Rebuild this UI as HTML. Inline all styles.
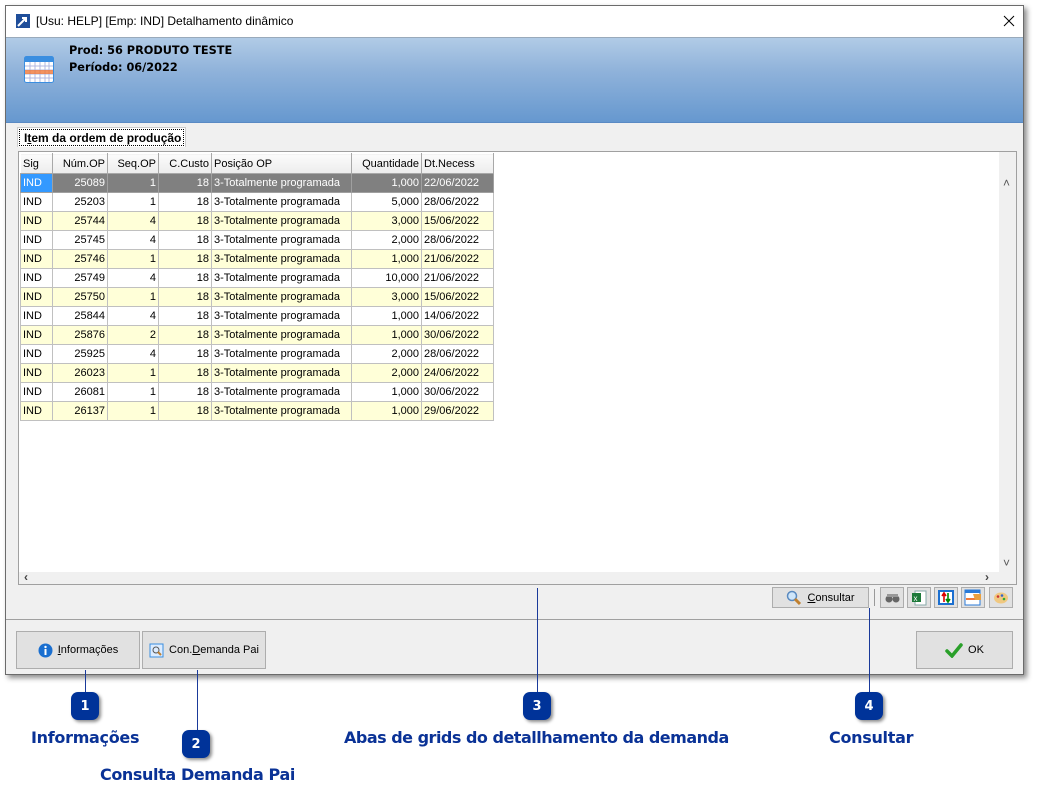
<!DOCTYPE html>
<html><head><meta charset="utf-8">
<style>
*{box-sizing:border-box;margin:0;padding:0}
body{width:1047px;height:804px;background:#fff;position:relative;font-family:"Liberation Sans",Tahoma,sans-serif;font-size:11px;color:#000;overflow:hidden}
.abs{position:absolute}
#win{left:5px;top:5px;width:1019px;height:670px;background:#f0f0f0;border:1px solid #6b6b6b;box-shadow:3px 3px 5px rgba(0,0,0,.45)}
#title{left:0;top:0;width:1017px;height:31px;background:#fff}
#hdr{left:0;top:31px;width:1017px;height:86px;background:linear-gradient(#b1cbe6,#8fb2da 40%,#6698cf);border-top:1px solid #9ab;border-bottom:1px solid #5a8ac4}
.hb{font-family:"DejaVu Sans",sans-serif;font-weight:bold;font-size:11.3px;color:#000}
#grid{left:12px;top:145px;width:999px;height:434px;border:1px solid #a0a0a0;background:#fff}
table{border-collapse:collapse;position:absolute;left:1px;top:1px;table-layout:fixed}
td{height:19px;border:1px solid #c0c0c0;padding:0 2px;white-space:nowrap;overflow:hidden;font-size:11px}
tr.h td{height:20px;background:linear-gradient(#fbfbfb,#ececec);border-color:#fff #a8a8a8 #a8a8a8 #fff;}
td.r{text-align:right}
tr.s td{background:#808080;color:#fff;border-color:#a0a0a0}
tr.s td:first-child{background:#3399ff}
tr.y td{background:#ffffd8}
.btn{background:#e1e1e1;border:1px solid #adadad;display:flex;align-items:center;justify-content:center;gap:5px;font-size:11px}
.tb{top:581px;width:24px;height:21px;background:#e1e1e1;border:1px solid #adadad}
.badge{width:28px;height:28px;border-radius:7px;background:#003399;color:#fff;font:bold 13px "DejaVu Sans",sans-serif;display:flex;align-items:center;justify-content:center;box-shadow:2px 2px 3px rgba(0,0,0,.45)}
.ln{width:1px;background:#1a3a9a}
.lbl{font:900 16px "DejaVu Sans",sans-serif;color:#0a3296;white-space:nowrap}
</style></head><body>
<div id="win" class="abs">
 <div id="title" class="abs">
  <svg class="abs" style="left:10px;top:8px" width="14" height="14"><rect width="14" height="14" fill="#1f4e9a"/><path d="M2 12 L10 4 M6 4 H10 V8" stroke="#fff" stroke-width="2" fill="none"/></svg>
  <div class="abs" style="left:30px;top:8px;font-size:12px">[Usu: HELP] [Emp: IND] Detalhamento dinâmico</div>
  <svg class="abs" style="left:997px;top:9px" width="12" height="12"><path d="M1 1L11 11M11 1L1 11" stroke="#000" stroke-width="1"/></svg>
 </div>
 <div id="hdr" class="abs">
  <svg class="abs" style="left:18px;top:18px" width="30" height="27"><rect x=".5" y=".5" width="29" height="26" rx="2" fill="#fff" stroke="#3a8ee0"/><rect x="1" y="1" width="28" height="5" fill="#3a8ee0"/><g stroke="#b0b8e0"><path d="M1 10H29M1 14H29M1 18H29M1 22H29M6 6V26M11 6V26M16 6V26M21 6V26M25 6V26"/></g><rect x="1" y="14" width="28" height="4" fill="#f07838" opacity=".8"/></svg>
  <div class="abs hb" style="left:63px;top:6px">Prod: 56 PRODUTO TESTE</div>
  <div class="abs hb" style="left:63px;top:23px">Período: 06/2022</div>
 </div>
 <div class="abs" style="left:11px;top:121px;width:169px;height:20px;background:#fff;border:1px solid #ccc;border-bottom:none"></div>
 <div class="abs" style="left:13px;top:123px;width:165px;height:17px;border:1px dotted #000;font-weight:bold;font-size:12px;padding:1px 0 0 4px">I<u>t</u>em da ordem de produção</div>
 <div id="grid" class="abs">
  <table>
   <colgroup><col style="width:32px"><col style="width:55px"><col style="width:51px"><col style="width:53px"><col style="width:140px"><col style="width:70px"><col style="width:72px"></colgroup>
   <tr class="h"><td>Sig</td><td class="r">Núm.OP</td><td class="r">Seq.OP</td><td class="r">C.Custo</td><td>Posição OP</td><td class="r">Quantidade</td><td>Dt.Necess</td></tr>
   <tr class="s"><td>IND</td><td class="r">25089</td><td class="r">1</td><td class="r">18</td><td>3-Totalmente programada</td><td class="r">1,000</td><td>22/06/2022</td></tr>
   <tr><td>IND</td><td class="r">25203</td><td class="r">1</td><td class="r">18</td><td>3-Totalmente programada</td><td class="r">5,000</td><td>28/06/2022</td></tr>
   <tr class="y"><td>IND</td><td class="r">25744</td><td class="r">4</td><td class="r">18</td><td>3-Totalmente programada</td><td class="r">3,000</td><td>15/06/2022</td></tr>
   <tr><td>IND</td><td class="r">25745</td><td class="r">4</td><td class="r">18</td><td>3-Totalmente programada</td><td class="r">2,000</td><td>28/06/2022</td></tr>
   <tr class="y"><td>IND</td><td class="r">25746</td><td class="r">1</td><td class="r">18</td><td>3-Totalmente programada</td><td class="r">1,000</td><td>21/06/2022</td></tr>
   <tr><td>IND</td><td class="r">25749</td><td class="r">4</td><td class="r">18</td><td>3-Totalmente programada</td><td class="r">10,000</td><td>21/06/2022</td></tr>
   <tr class="y"><td>IND</td><td class="r">25750</td><td class="r">1</td><td class="r">18</td><td>3-Totalmente programada</td><td class="r">3,000</td><td>15/06/2022</td></tr>
   <tr><td>IND</td><td class="r">25844</td><td class="r">4</td><td class="r">18</td><td>3-Totalmente programada</td><td class="r">1,000</td><td>14/06/2022</td></tr>
   <tr class="y"><td>IND</td><td class="r">25876</td><td class="r">2</td><td class="r">18</td><td>3-Totalmente programada</td><td class="r">1,000</td><td>30/06/2022</td></tr>
   <tr><td>IND</td><td class="r">25925</td><td class="r">4</td><td class="r">18</td><td>3-Totalmente programada</td><td class="r">2,000</td><td>28/06/2022</td></tr>
   <tr class="y"><td>IND</td><td class="r">26023</td><td class="r">1</td><td class="r">18</td><td>3-Totalmente programada</td><td class="r">2,000</td><td>24/06/2022</td></tr>
   <tr><td>IND</td><td class="r">26081</td><td class="r">1</td><td class="r">18</td><td>3-Totalmente programada</td><td class="r">1,000</td><td>30/06/2022</td></tr>
   <tr class="y"><td>IND</td><td class="r">26137</td><td class="r">1</td><td class="r">18</td><td>3-Totalmente programada</td><td class="r">1,000</td><td>29/06/2022</td></tr>
  </table>
  <div class="abs" style="left:980px;top:0;width:17px;height:420px;background:#f0f0f0"></div>
  <div class="abs" style="left:984px;top:24px;font-size:12px;color:#555">˄</div>
  <div class="abs" style="left:984px;top:404px;font-size:12px;color:#555">˅</div>
  <div class="abs" style="left:0;top:420px;width:997px;height:12px;background:#f0f0f0"></div>
  <div class="abs" style="left:5px;top:418px;font-size:12px;color:#444;font-weight:bold">‹</div>
  <div class="abs" style="left:966px;top:418px;font-size:12px;color:#444;font-weight:bold">›</div>
 </div>
 <div class="abs btn" style="left:766px;top:581px;width:97px;height:21px"><svg width="16" height="16"><circle cx="6" cy="6" r="4.5" fill="#cfe6fa" stroke="#5a8ac0" stroke-width="1.5"/><path d="M9 9L14 14" stroke="#c08030" stroke-width="3"/></svg><span><u>C</u>onsultar</span></div>
 <div class="abs" style="left:868px;top:583px;width:1px;height:17px;background:#999"></div>
 <div class="abs tb" style="left:874px"><svg width="22" height="19"><circle cx="8" cy="11" r="3.5" fill="#666"/><circle cx="15" cy="11" r="3.5" fill="#666"/><rect x="6" y="6" width="11" height="3" fill="#999"/></svg></div>
 <div class="abs tb" style="left:901px"><svg width="22" height="19"><rect x="7" y="3" width="11" height="14" fill="#fff" stroke="#8aa"/><rect x="4" y="5" width="9" height="9" fill="#1d7a3a"/><text x="5.5" y="13" font-size="8" fill="#fff" font-family="Liberation Sans">x</text></svg></div>
 <div class="abs tb" style="left:928px"><svg width="22" height="19"><rect x="3" y="2" width="16" height="15" fill="#1b6fd0"/><rect x="5" y="4" width="12" height="11" fill="#fff"/><path d="M9 14V6M7 8L9 5L11 8" stroke="#d00" stroke-width="1.6" fill="none"/><path d="M13 5V13M11 11L13 14L15 11" stroke="#080" stroke-width="1.6" fill="none"/></svg></div>
 <div class="abs tb" style="left:955px"><svg width="22" height="19"><rect x="3" y="2" width="15" height="15" fill="#fff" stroke="#2a7ad8"/><rect x="3" y="2" width="15" height="3" fill="#2a7ad8"/><rect x="4" y="10" width="13" height="2" fill="#f07838"/><path d="M11 6h8v6h-6z" fill="#e8a040"/></svg></div>
 <div class="abs tb" style="left:983px"><svg width="22" height="19"><ellipse cx="11" cy="10" rx="7" ry="5.5" fill="#f0c880"/><circle cx="8" cy="8.5" r="1.3" fill="#c33"/><circle cx="12" cy="7.5" r="1.3" fill="#36c"/><circle cx="14" cy="11" r="1.3" fill="#3a3"/></svg></div>
 <div class="abs" style="left:0;top:613px;width:1017px;height:1px;background:#a0a0a0"></div>
 <div class="abs btn" style="left:10px;top:625px;width:124px;height:38px"><svg width="15" height="15"><circle cx="7.5" cy="7.5" r="7" fill="#1a6fd0"/><rect x="6.5" y="6" width="2" height="6" fill="#fff"/><circle cx="7.5" cy="4" r="1.2" fill="#fff"/></svg><span><u>I</u>nformações</span></div>
 <div class="abs btn" style="left:136px;top:625px;width:124px;height:38px"><svg width="15" height="15"><rect x="1" y="1" width="13" height="13" fill="#dcecff" stroke="#3a8ee0"/><circle cx="7" cy="7" r="3" fill="none" stroke="#555"/><path d="M9 9L12 12" stroke="#c08030" stroke-width="2"/></svg><span>Con.<u>D</u>emanda Pai</span></div>
 <div class="abs btn" style="left:910px;top:625px;width:97px;height:38px"><svg width="18" height="16"><path d="M2 9L7 14L16 3" stroke="#2aa02a" stroke-width="3.5" fill="none" stroke-linecap="round"/></svg><span>OK</span></div>
</div>
<div class="abs ln" style="left:85px;top:670px;height:23px"></div>
<div class="abs ln" style="left:197px;top:670px;height:61px"></div>
<div class="abs ln" style="left:537px;top:588px;height:105px"></div>
<div class="abs ln" style="left:869px;top:608px;height:85px"></div>
<div class="abs badge" style="left:71px;top:692px">1</div>
<div class="abs badge" style="left:182px;top:730px">2</div>
<div class="abs badge" style="left:523px;top:692px">3</div>
<div class="abs badge" style="left:855px;top:692px">4</div>
<div class="abs lbl" style="left:31px;top:728px;letter-spacing:-0.3px">Informações</div>
<div class="abs lbl" style="left:100px;top:765px;letter-spacing:-0.4px">Consulta Demanda Pai</div>
<div class="abs lbl" style="left:344px;top:728px;letter-spacing:-0.5px">Abas de grids do detallhamento da demanda</div>
<div class="abs lbl" style="left:829px;top:728px;letter-spacing:-0.3px">Consultar</div>
</body></html>
